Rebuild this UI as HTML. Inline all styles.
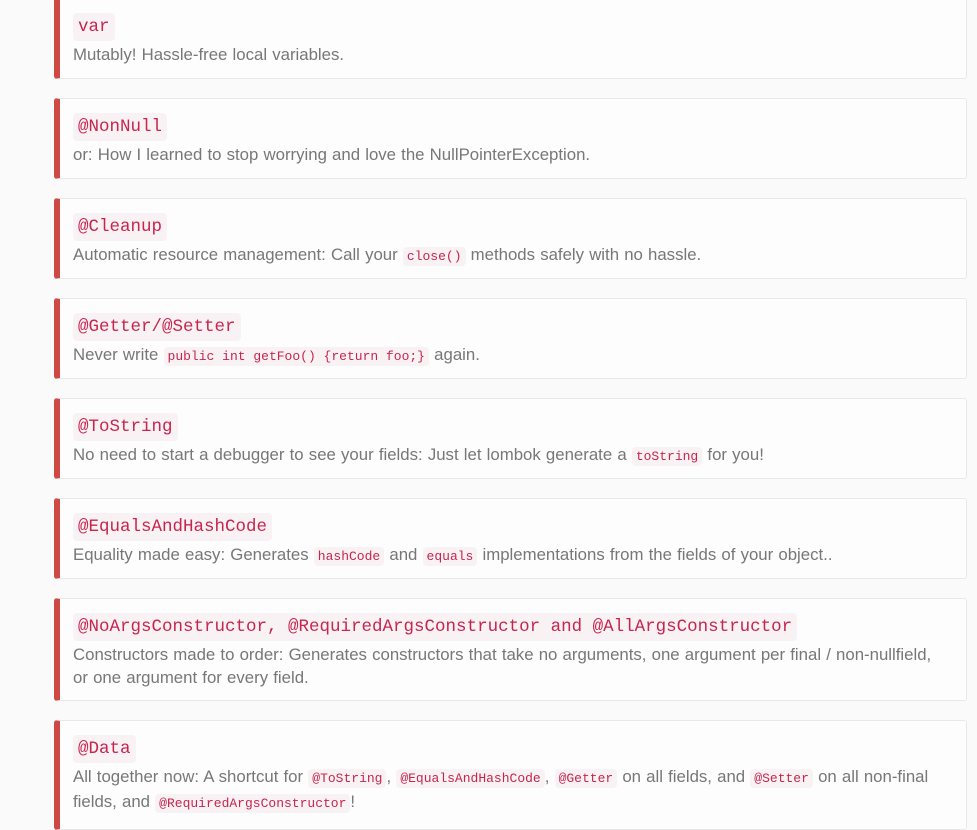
<!DOCTYPE html>
<html><head><meta charset="utf-8"><style>
body{margin:0;background:#fafafa;font-family:"Liberation Sans",sans-serif;width:977px;height:815px;overflow:hidden;position:relative}
.c{position:absolute;left:54px;width:913px;background:#fdfdfd;border:1px solid #e8e8e8;border-left:6px solid #ce4844;border-radius:3px;box-sizing:border-box}
.t{position:absolute;top:14px;left:13px;font-family:"Liberation Mono",monospace;font-size:17.5px;color:#c7254e;background:#f9f2f4;padding:2px 5px;border-radius:4px;line-height:24px;white-space:nowrap}
.d{position:absolute;top:44px;left:13px;font-size:16.8px;word-spacing:0.5px;color:#777;line-height:23px;white-space:nowrap}
code{font-family:"Liberation Mono",monospace;font-size:13px;color:#c7254e;background:#f9f2f4;padding:2px 4px;border-radius:4px;word-spacing:0}
</style></head><body>
<div class="c" style="top:-2px;height:81px"><span class="t">var</span><div class="d">Mutably! Hassle-free local variables.</div></div>
<div class="c" style="top:98px;height:81px"><span class="t">@NonNull</span><div class="d">or: How I learned to stop worrying and love the NullPointerException.</div></div>
<div class="c" style="top:198px;height:81px"><span class="t">@Cleanup</span><div class="d">Automatic resource management: Call your <code>close()</code> methods safely with no hassle.</div></div>
<div class="c" style="top:298px;height:81px"><span class="t">@Getter/@Setter</span><div class="d">Never write <code>public int getFoo() {return foo;}</code> again.</div></div>
<div class="c" style="top:398px;height:81px"><span class="t">@ToString</span><div class="d">No need to start a debugger to see your fields: Just let lombok generate a <code>toString</code> for you!</div></div>
<div class="c" style="top:498px;height:81px"><span class="t">@EqualsAndHashCode</span><div class="d">Equality made easy: Generates <code>hashCode</code> and <code>equals</code> implementations from the fields of your object..</div></div>
<div class="c" style="top:598px;height:103px"><span class="t">@NoArgsConstructor, @RequiredArgsConstructor and @AllArgsConstructor</span><div class="d">Constructors made to order: Generates constructors that take no arguments, one argument per final / non-nullfield,<br>or one argument for every field.</div></div>
<div class="c" style="top:720px;height:110px"><span class="t">@Data</span><div class="d">All together now: A shortcut for <code>@ToString</code>, <code>@EqualsAndHashCode</code>, <code>@Getter</code> on all fields, and <code>@Setter</code> on all non-final<br>fields, and <code>@RequiredArgsConstructor</code>!</div></div>
</body></html>
